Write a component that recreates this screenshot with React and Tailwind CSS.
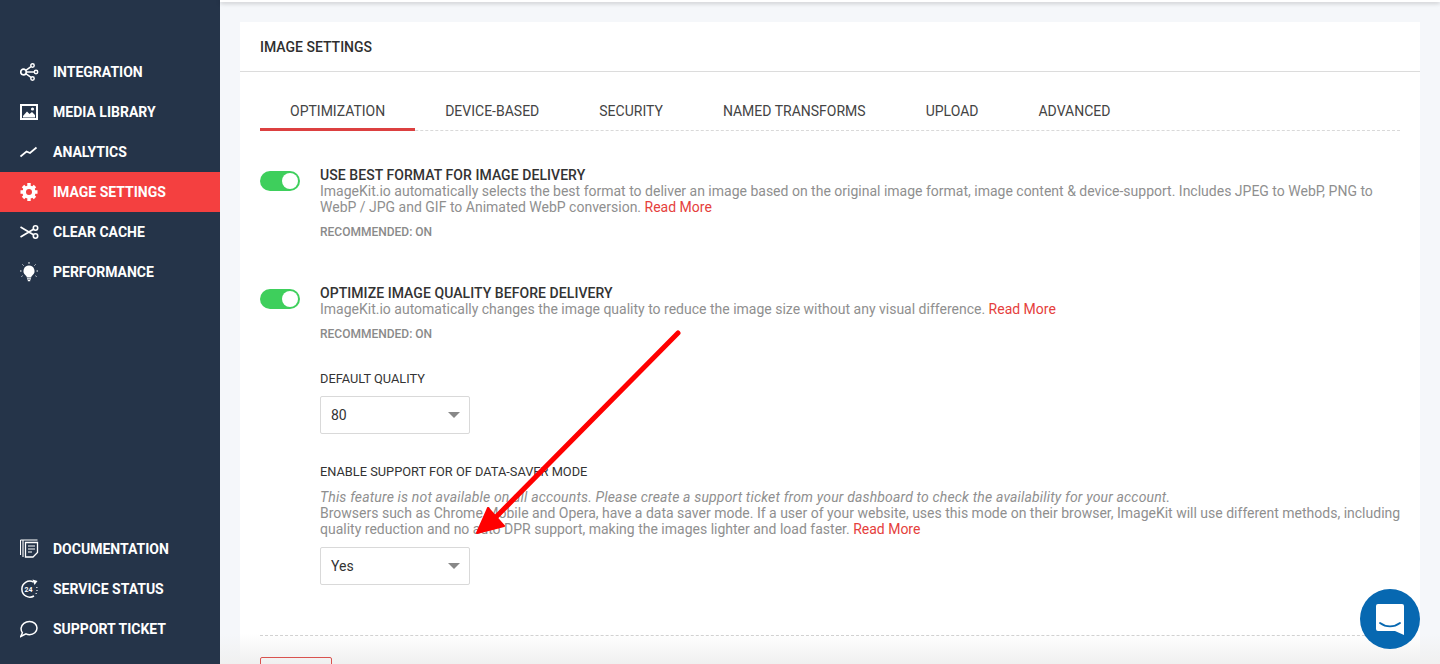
import React from 'react';

const Ico = ({ children }) => (
  <svg width="20" height="20" viewBox="0 0 20 20" fill="none" stroke="white" strokeWidth="1.5" className="shrink-0">
    {children}
  </svg>
);

const topNav = [
  {
    label: 'INTEGRATION',
    icon: (
      <Ico>
        <circle cx="3.500" cy="10" r="2.800" strokeWidth="1.700" />
        <circle cx="12.500" cy="3.500" r="1.700" />
        <circle cx="16" cy="10" r="1.700" />
        <circle cx="12.500" cy="16.500" r="1.700" />
        <path d="M5.800 8.300L11 4.600M6.500 10h7.800M5.800 11.700L11 15.400" />
      </Ico>
    ),
  },
  {
    label: 'MEDIA LIBRARY',
    icon: (
      <Ico>
        <rect x="1" y="3" width="16" height="14" strokeWidth="2" />
        <path d="M3 15.500V14l4-4.500 2.500 2.500 2.500-2 3 3v2.500z" fill="white" stroke="none" />
        <circle cx="12.500" cy="7" r="1.600" fill="white" stroke="none" />
      </Ico>
    ),
  },
  {
    label: 'ANALYTICS',
    icon: (
      <Ico>
        <path d="M0.500 14.500L6.500 9.500L10 11L16.500 5.500" strokeWidth="1.700" />
      </Ico>
    ),
  },
  {
    label: 'IMAGE SETTINGS',
    active: true,
    icon: (
      <Ico>
        <circle cx="9" cy="10" r="4.800" strokeWidth="3.600" />
        <path
          d="M9 1v3M9 16v3M0.500 10h3M14.500 10h3M3 4l2.200 2.200M12.800 13.800L15 16M15 4l-2.200 2.200M5.200 13.800L3 16"
          strokeWidth="3.400"
        />
      </Ico>
    ),
  },
  {
    label: 'CLEAR CACHE',
    icon: (
      <Ico>
        <circle cx="15.500" cy="6" r="2.200" strokeWidth="1.600" />
        <circle cx="15.500" cy="14" r="2.200" strokeWidth="1.600" />
        <path d="M0.500 5L13.500 12.800M0.500 15L13.500 7.200" strokeWidth="1.700" />
      </Ico>
    ),
  },
  {
    label: 'PERFORMANCE',
    icon: (
      <Ico>
        <path d="M9 3.500a5.500 5.500 0 0 0-3.300 9.900c.8.700 1.100 1.300 1.100 2.100h4.400c0-.8.300-1.400 1.100-2.100A5.500 5.500 0 0 0 9 3.500z" fill="white" stroke="none" />
        <path d="M7 16.800h4M7.800 18.600h2.400" strokeWidth="1.200" />
        <path d="M9 0v1.800M2.500 2.500l1 1M15.500 2.500l-1 1M0 9h1.500M16.500 9H18M1.500 14.500l1-.7M16.500 14.500l-1-.7" strokeWidth="1" />
      </Ico>
    ),
  },
];

const bottomNav = [
  {
    label: 'DOCUMENTATION',
    icon: (
      <Ico>
        <path d="M0.500 1v15M3 1v17M0.500 1h17" strokeWidth="1.100" />
        <path d="M5.500 3.500h12v10l-4.500 4.500H5.500z" strokeWidth="1.300" />
        <path d="M8 7h7M8 10h7M8 13h4" strokeWidth="1.100" />
      </Ico>
    ),
  },
  {
    label: 'SERVICE STATUS',
    icon: (
      <Ico>
        <path d="M13.500 3a8 8 0 1 0 .5 14" strokeWidth="1.500" />
        <path d="M12.500 0.500l5 1.500-3 4z" fill="white" stroke="none" />
        <path d="M16.800 8v.8M17 11v.8M16.200 14v.8" strokeWidth="1.500" />
        <text x="8.500" y="12.500" fontSize="7" fontWeight="700" textAnchor="middle" fill="white" stroke="none" fontFamily="Roboto, sans-serif">
          24
        </text>
      </Ico>
    ),
  },
  {
    label: 'SUPPORT TICKET',
    icon: (
      <Ico>
        <path d="M9.500 2.500c4.200 0 7.500 2.900 7.500 6.600s-3.300 6.600-7.500 6.600c-1.400 0-2.500-.3-3.500-.8L0.700 17.500l1.700-3.800C1.300 12.500 1 10.800 1.100 9.100c.4-3.700 4.200-6.600 8.400-6.600z" />
      </Ico>
    ),
  },
];

const NavItem = ({ item }) => (
  <div className={`flex h-10 items-center gap-[13px] pl-[20px] text-[14px] font-bold text-white ${item.active ? 'bg-[#f44040]' : ''}`}>
    {item.icon}
    <span>{item.label}</span>
  </div>
);

const tabs = ['OPTIMIZATION', 'DEVICE-BASED', 'SECURITY', 'NAMED TRANSFORMS', 'UPLOAD', 'ADVANCED'];

const Toggle = () => (
  <div className="mt-[4px] flex h-5 w-10 shrink-0 items-center justify-end rounded-full bg-[#3ecf5c] pr-[2px]">
    <div className="h-4 w-4 rounded-full bg-white" />
  </div>
);

const ReadMore = () => <span className="text-[#e5403c]">Read More</span>;

const Select = ({ value }) => (
  <div className="flex h-[38px] w-[150px] items-center justify-between rounded-[2px] border border-[#d9d9d9] bg-white pl-[10px] pr-[9px] text-[14px] text-[#333]">
    <span>{value}</span>
    <div className="h-0 w-0 border-x-[6px] border-t-[6px] border-x-transparent border-t-[#888]" />
  </div>
);

export default function App() {
  return (
    <div className="relative flex h-[664px] w-[1440px] overflow-hidden bg-[#f5f7fa] font-['Roboto',sans-serif]">
      <aside className="flex w-[220px] shrink-0 flex-col justify-between bg-[#253449] pb-[15px] pt-[52px]">
        <nav>
          {topNav.map((item) => (
            <NavItem key={item.label} item={item} />
          ))}
        </nav>
        <nav>
          {bottomNav.map((item) => (
            <NavItem key={item.label} item={item} />
          ))}
        </nav>
      </aside>

      <main className="min-w-0 flex-1">
        <div className="h-[2px] bg-white shadow-[0_1px_4px_rgba(0,0,0,0.3)]" />
        <section className="ml-5 mr-5 mt-5 h-[700px] bg-white">
          <h1 className="flex h-[50px] items-center border-b border-[#dcdcdc] px-5 pt-[2px] text-[14px] font-medium text-[#2f2f2f]">
            IMAGE SETTINGS
          </h1>

          <div className="px-5">
            <div className="flex h-[59px] border-b border-dashed border-[#d9d9d9] text-[14px] text-[#444]">
              {tabs.map((tab, i) => (
                <div
                  key={tab}
                  className={`-mb-[1px] flex items-end border-b-[3px] px-[30px] pb-[6px] ${i === 0 ? 'border-[#dc4040]' : 'border-transparent'}`}
                >
                  {tab}
                </div>
              ))}
            </div>

            <div className="mt-[36px] flex gap-5">
              <Toggle />
              <div className="min-w-0 flex-1">
                <h2 className="mt-[1px] text-[14px] font-medium leading-[15px] tracking-[0.06px] text-[#333]">USE BEST FORMAT FOR IMAGE DELIVERY</h2>
                <p className="text-[14px] leading-4 text-[#8f8f8f]">
                  ImageKit.io automatically selects the best format to deliver an image based on the original image format, image content &amp; device-support. Includes JPEG to WebP, PNG to WebP / JPG and GIF to Animated WebP conversion. <ReadMore />
                </p>
                <p className="mt-[10px] text-[12px] font-medium leading-[14px] text-[#8a8a8a]">RECOMMENDED: ON</p>
              </div>
            </div>

            <div className="mt-[46px] flex gap-5">
              <Toggle />
              <div className="min-w-0 flex-1">
                <h2 className="mt-[1px] text-[14px] font-medium leading-[15px] tracking-[0.06px] text-[#333]">OPTIMIZE IMAGE QUALITY BEFORE DELIVERY</h2>
                <p className="text-[14px] leading-4 text-[#8f8f8f]">
                  ImageKit.io automatically changes the image quality to reduce the image size without any visual difference. <ReadMore />
                </p>
                <p className="mt-[10px] text-[12px] font-medium leading-[14px] text-[#8a8a8a]">RECOMMENDED: ON</p>

                <p className="mt-[31px] text-[12.8px] leading-[14px] text-[#333]">DEFAULT QUALITY</p>
                <div className="mt-[10px]">
                  <Select value="80" />
                </div>

                <p className="mt-[31px] text-[12.8px] leading-[14px] text-[#333]">ENABLE SUPPORT FOR OF DATA-SAVER MODE</p>
                <p className="-mr-1 mt-[10px] text-[14px] leading-4 text-[#8f8f8f]">
                  <i className="tracking-[0.16px]">This feature is not available on all accounts. Please create a support ticket from your dashboard to check the availability for your account.</i>
                  <br />
                  Browsers such as Chrome Mobile and Opera, have a data saver mode. If a user of your website, uses this mode on their browser, ImageKit will use different methods, including quality reduction and no auto DPR support, making the images lighter and load faster. <ReadMore />
                </p>
                <div className="mt-[10px]">
                  <Select value="Yes" />
                </div>
              </div>
            </div>

            <div className="mt-[50px] border-t border-dashed border-[#d0d0d0]" />
            <div className="relative z-10 mt-[21px] h-10 w-[72px] rounded-[2px] border border-[#d9534f]" />
          </div>
        </section>
      </main>

      {/* fade along the bottom of the page */}
      <div className="absolute bottom-0 left-[220px] right-0 h-[30px] bg-gradient-to-t from-[#f0f0f0] to-transparent" />

      {/* red annotation arrow */}
      <svg className="absolute left-[460px] top-[320px]" width="240" height="230" viewBox="0 0 240 230">
        <path d="M218 13L35 198" stroke="#ff0000" strokeWidth="5" strokeLinecap="round" />
        <path d="M17 213L28 188L44 206z" fill="#ff0000" stroke="#ff0000" strokeWidth="2" strokeLinejoin="round" />
      </svg>

      {/* chat launcher */}
      <div className="absolute left-[1360px] top-[589px] flex h-[60px] w-[60px] items-center justify-center rounded-full bg-[#0768b1]">
        <svg width="28" height="31" viewBox="0 0 28 31">
          <path d="M2 0h24a2 2 0 0 1 2 2v29l-9-4H2a2 2 0 0 1-2-2V2a2 2 0 0 1 2-2z" fill="white" />
          <path d="M4 19c6 4.500 14 4.500 20 0" fill="none" stroke="#0768b1" strokeWidth="1.800" strokeLinecap="round" />
        </svg>
      </div>
    </div>
  );
}
